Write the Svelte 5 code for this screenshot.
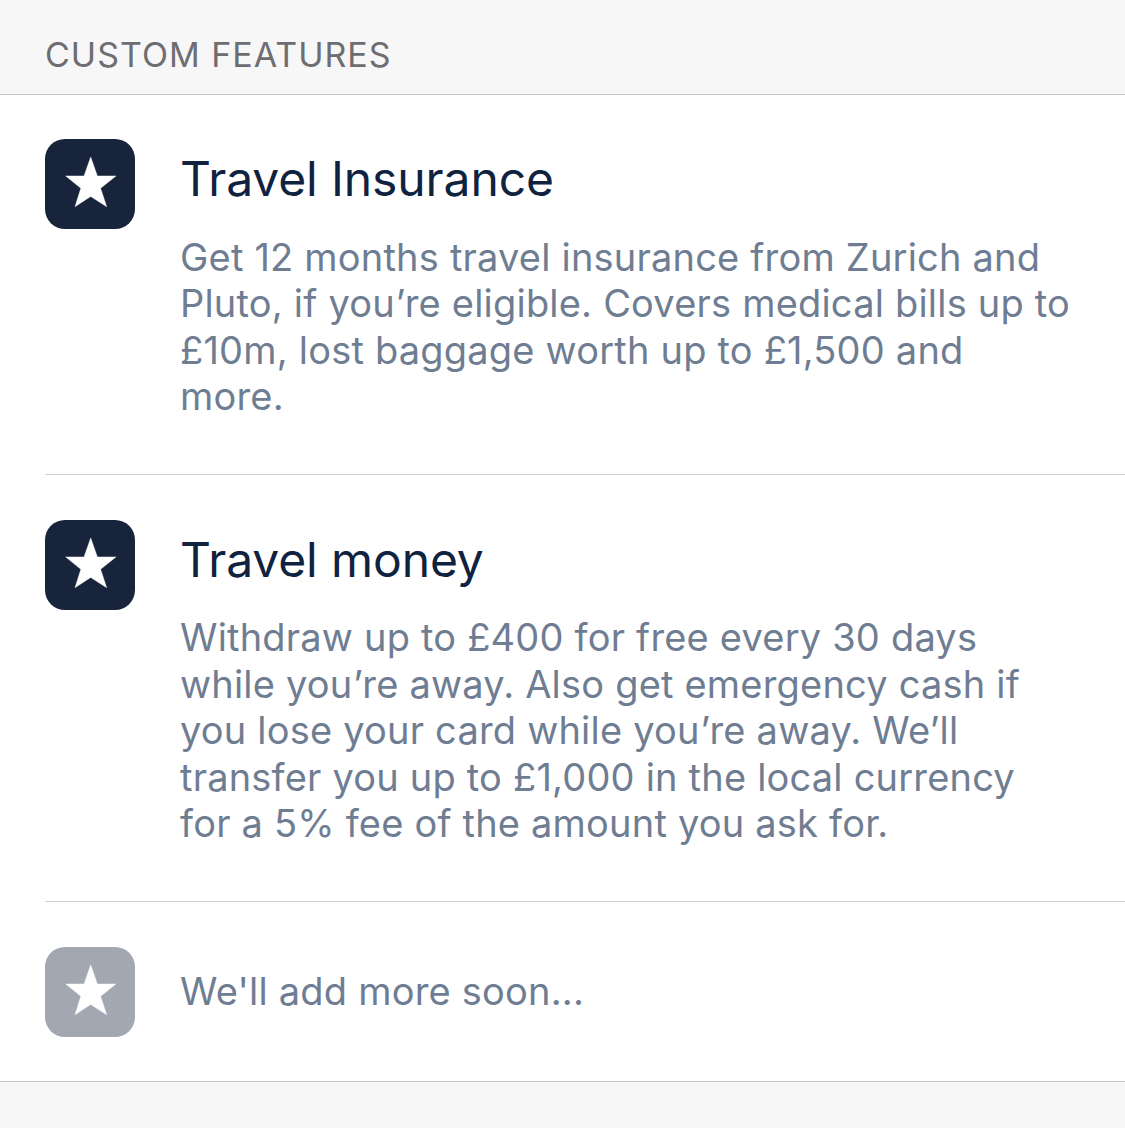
<script>
  const features = [
    {
      title: 'Travel Insurance',
      text: ['Get 12 months travel insurance from Zurich and', 'Pluto, if you’re eligible. Covers medical bills up to', '£10m, lost baggage worth up to £1,500 and', 'more.']
    },
    {
      title: 'Travel money',
      text: ['Withdraw up to £400 for free every 30 days', 'while you’re away. Also get emergency cash if', 'you lose your card while you’re away. We’ll', 'transfer you up to £1,000 in the local currency', 'for a 5% fee of the amount you ask for.']
    }
  ];
</script>

{#snippet star(muted)}
  <div class="badge" class:muted>
    <svg viewBox="0 0 90 90" width="90" height="90"><path d="M45.700 18L52.400 36.900 71 36.900 55.600 49.300 61.700 67.700 45.700 57.500 30 67.700 35.800 49.300 20.700 36.900 39 36.900z" fill="#fff" stroke="#fff" stroke-width="0.400" stroke-linejoin="round"/></svg>
  </div>
{/snippet}

<header>CUSTOM FEATURES</header>
<section>
  {#each features as f}
    <div class="row">
      {@render star(false)}
      <div class="body">
        <h3>{f.title}</h3>
        <p>{#each f.text as line}<span>{line}</span>{/each}</p>
      </div>
    </div>
  {/each}
  <div class="row last">
    {@render star(true)}
    <p class="soon">We'll add more soon...</p>
  </div>
</section>
<div class="foot"></div>

<style>
  :global(body) {
    background: #f7f7f7;
    font-family: Inter, "Liberation Sans", sans-serif;
  }
  header {
    height: 95px;
    box-sizing: border-box;
    padding: 36px 0 0 45px;
    font-size: 34px;
    line-height: 38px;
    letter-spacing: 1px;
    color: #6d6d72;
    border-bottom: 1px solid #c8c7cc;
  }
  section {
    background: #fff;
    padding-left: 45px;
    border-bottom: 1px solid #c8c7cc;
  }
  .row {
    display: flex;
    gap: 45px;
    padding: 44px 0 54px;
    border-bottom: 1px solid #d0d0d0;
  }
  .row + .row {
    padding-top: 45px;
    padding-bottom: 54px;
  }
  .row.last {
    border-bottom: 0;
    padding: 45px 0 44px;
    align-items: center;
  }
  .badge {
    flex: none;
    width: 90px;
    height: 90px;
    border-radius: 20px;
    background: #18243c;
  }
  .badge svg {
    display: block;
  }
  .badge.muted {
    background: #a2a7b2;
  }
  h3 {
    margin: 0;
    font-size: 48px;
    line-height: 80px;
    font-weight: 400;
    letter-spacing: -0.1px;
    color: #0f2240;
  }
  p {
    margin: 0;
    font-size: 38px;
    line-height: 46.500px;
    color: #6f7d93;
    letter-spacing: 0.200px;
  }
  .body p {
    margin-top: 14.500px;
  }
  p span {
    display: block;
    white-space: nowrap;
  }
</style>
